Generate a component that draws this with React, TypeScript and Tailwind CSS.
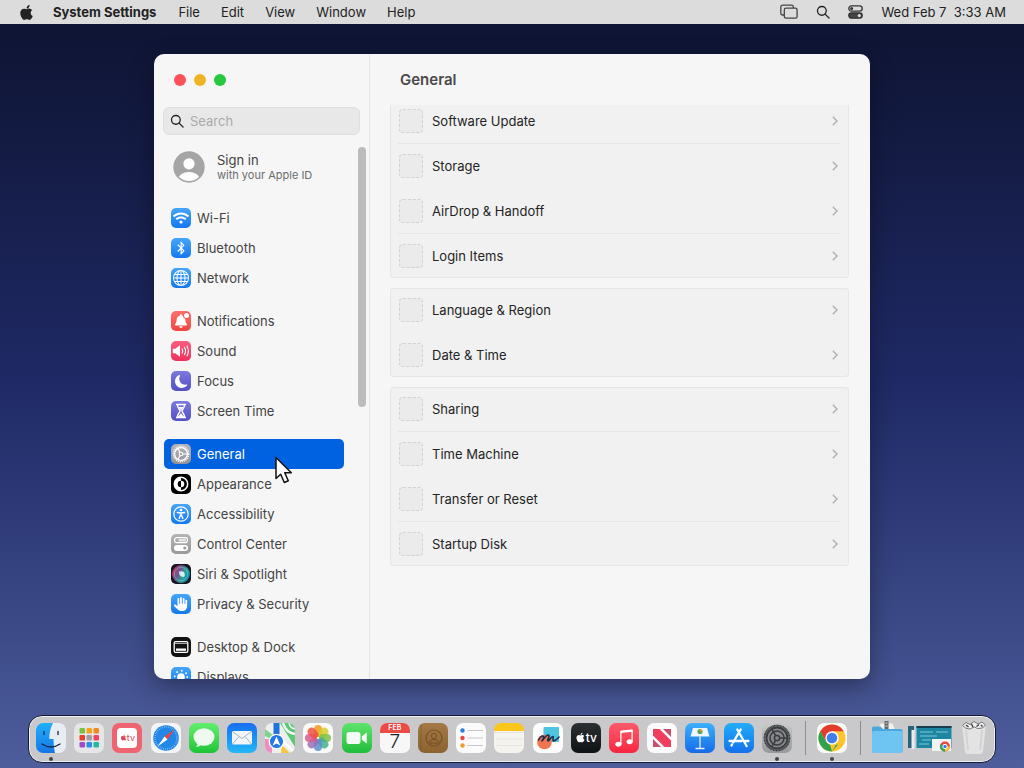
import type { ReactNode } from "react";
import { FaApple, FaBluetoothB, FaWifi, FaBell } from "react-icons/fa";
import { FaHand } from "react-icons/fa6";
import { BsMoonFill, BsGlobe, BsMusicNoteBeamed } from "react-icons/bs";

type Item = { name: string; color: string; icon: ReactNode };

function Gear({ className }: { className?: string }) {
  return (
    <svg viewBox="0 0 20 20" className={className} fill="none" stroke="currentColor">
      <circle cx="10" cy="10" r="7.6" strokeWidth="1.6" strokeDasharray="1.1 0.9" />
      <circle cx="10" cy="10" r="6.4" strokeWidth="1.3" />
      <circle cx="10" cy="10" r="1.8" strokeWidth="1.1" />
      <path d="M11.8 10h4.6M9.1 8.4 6.8 4.5M9.1 11.6l-2.3 3.9" strokeWidth="1.2" />
    </svg>
  );
}

const blue = "bg-linear-to-b from-[#45a5f8] to-[#1478ee]";
const purple = "bg-linear-to-b from-[#7d79e0] to-[#5450c4]";

const sidebar: Item[][] = [
  [
    { name: "Wi-Fi", color: blue, icon: <FaWifi className="size-4" /> },
    { name: "Bluetooth", color: blue, icon: <FaBluetoothB className="size-3.5" /> },
    { name: "Network", color: blue, icon: <BsGlobe className="size-4" /> },
  ],
  [
    {
      name: "Notifications",
      color: "bg-linear-to-b from-[#ff7069] to-[#ee4440]",
      icon: (
        <span className="relative">
          <FaBell className="size-3.5" />
          <span className="absolute -top-px -right-px size-[5px] rounded-full bg-white ring-1 ring-[#fa5d57]" />
        </span>
      ),
    },
    {
      name: "Sound",
      color: "bg-linear-to-b from-[#fb5c81] to-[#ee2f5b]",
      icon: (
        <svg viewBox="0 0 20 20" className="size-5" fill="none" stroke="white">
          <path d="M1.8 7.800h2.500L9 4.300v11.400L4.300 12.200H1.800z" fill="white" stroke="none" />
          <path d="M11 7.500q1.500 2.500 0 5M13.300 6q2.500 4 0 8M15.700 4.700q3.400 5.300 0 10.600" strokeWidth="1.1" />
        </svg>
      ),
    },
    { name: "Focus", color: purple, icon: <BsMoonFill className="size-[13px]" /> },
    {
      name: "Screen Time",
      color: purple,
      icon: (
        <svg viewBox="0 0 20 20" className="size-5" fill="none" stroke="white">
          <path d="M5 3.5h10M5 16.5h10" strokeWidth="1.7" />
          <path d="M6.5 4c0 3.5 2.5 4.5 2.5 6s-2.5 2.500-2.500 6h7c0-3.500-2.500-4.500-2.500-6s2.500-2.500 2.500-6" strokeWidth="1.4" />
          <path d="M7.5 6h5L10 9.500zM7.300 15.800 10 12l2.700 3.800z" fill="white" stroke="none" />
        </svg>
      ),
    },
  ],
  [
    { name: "General", color: "bg-linear-to-b from-[#b5b5ba] to-[#929297]", icon: <Gear className="size-5" /> },
    {
      name: "Appearance",
      color: "bg-black",
      icon: (
        <svg viewBox="0 0 20 20" className="size-5">
          <circle cx="10" cy="10" r="6.7" fill="none" stroke="white" strokeWidth="1.5" />
          <path d="M10 3.300a6.700 6.700 0 0 0 0 13.400v-3.400a3.300 3.300 0 0 1 0-6.600z" fill="white" />
          <path d="M10 6.700a3.300 3.300 0 0 1 0 6.600z" fill="white" />
        </svg>
      ),
    },
    {
      name: "Accessibility",
      color: blue,
      icon: (
        <svg viewBox="0 0 20 20" className="size-5" fill="none" stroke="white" strokeLinecap="round">
          <circle cx="10" cy="10" r="7.2" strokeWidth="1.2" />
          <circle cx="10" cy="6" r="1.3" fill="white" stroke="none" />
          <path d="M6.300 8.500 10 9l3.700-.5M10 9v2.500M8.200 14.500 9.300 11.500h1.400l1.100 3" strokeWidth="1.4" />
        </svg>
      ),
    },
    {
      name: "Control Center",
      color: "bg-linear-to-b from-[#b4b4b4] to-[#989898]",
      icon: (
        <svg viewBox="0 0 20 20" className="size-5">
          <rect x="3.5" y="3.7" width="13" height="5" rx="2.500" fill="none" stroke="white" strokeWidth="1.2" />
          <rect x="7.5" y="4.9" width="7.5" height="2.6" rx="1.300" fill="#e8e8e8" />
          <rect x="3" y="11" width="14" height="6" rx="3" fill="white" />
          <circle cx="13.8" cy="14" r="1.6" fill="#999" />
        </svg>
      ),
    },
    {
      name: "Siri & Spotlight",
      color: "bg-[#18151f]",
      icon: (
        <svg viewBox="0 0 20 20" className="size-5">
          <defs>
            <linearGradient id="siri" x1="0" y1="0.2" x2="1" y2="0.7">
              <stop offset="0" stopColor="#d3215f" />
              <stop offset="0.4" stopColor="#6d5a91" />
              <stop offset="0.7" stopColor="#27a99a" />
              <stop offset="1" stopColor="#1377b7" />
            </linearGradient>
          </defs>
          <circle cx="10" cy="10" r="9" fill="url(#siri)" />
          <circle cx="10" cy="10" r="6.7" fill="none" stroke="#63cfc0" strokeOpacity="0.6" />
          <path d="M8 7.500q5-1 5.500 1.500 1 4-1.500 4-4-.5-4-5.500z" fill="#e0fbff" opacity="0.9" />
        </svg>
      ),
    },
    { name: "Privacy & Security", color: blue, icon: <FaHand className="size-3.5" /> },
  ],
  [
    {
      name: "Desktop & Dock",
      color: "bg-[#111]",
      icon: (
        <svg viewBox="0 0 20 20" className="size-5">
          <rect x="3.2" y="4.7" width="13.6" height="10.6" rx="1.3" fill="none" stroke="white" strokeWidth="1.3" />
          <path d="M4 6.500h12" stroke="#aaa" />
          <rect x="5" y="11.5" width="10" height="2.3" fill="white" />
        </svg>
      ),
    },
    {
      name: "Displays",
      color: blue,
      icon: (
        <svg viewBox="0 0 20 20" className="size-5">
          <circle cx="10" cy="10" r="3.8" fill="white" />
          <circle cx="10" cy="10" r="6.3" fill="none" stroke="white" strokeWidth="1.8" strokeLinecap="round" strokeDasharray="0.1 4.85" />
        </svg>
      ),
    },
  ],
];

// rows are grouped by the visible dividers inside each panel
const panels = [
  [["Software Update"], ["Storage", "AirDrop & Handoff"], ["Login Items"]],
  [["Language & Region", "Date & Time"]],
  [["Sharing"], ["Time Machine", "Transfer or Reset"], ["Startup Disk"]],
];

function SearchIcon({ className }: { className?: string }) {
  return (
    <svg viewBox="0 0 16 16" className={className} fill="none" stroke="currentColor" strokeWidth="1.5" strokeLinecap="round">
      <circle cx="6.7" cy="6.7" r="5" />
      <path d="m10.400 10.400 4.500 4.500" />
    </svg>
  );
}

function MenuBar() {
  return (
    <header className="flex h-6 shrink-0 items-center justify-between bg-[#dcdcdc] px-[18px] text-[#222]">
      <nav className="flex items-center gap-[21px]">
        <button aria-label="Apple" className="w-[14px]">
          <FaApple className="size-[17px]" />
        </button>
        <button className="mr-px font-bold">System Settings</button>
        {["File", "Edit", "View", "Window", "Help"].map((m) => (
          <button key={m}>{m}</button>
        ))}
      </nav>
      <div className="flex items-center gap-[18px]">
        <svg viewBox="0 0 18 16" className="h-4 w-[18px]" fill="none" stroke="#444" strokeWidth="1.3">
          <path d="M4 11H2.500A1.800 1.800 0 0 1 .8 9.200V3A1.800 1.800 0 0 1 2.500 1.200h9A1.800 1.800 0 0 1 13.300 3v1" />
          <rect x="4.3" y="4.2" width="12.8" height="10" rx="1.8" />
        </svg>
        <SearchIcon className="size-[14px]" />
        <svg viewBox="0 0 15 14" className="h-[14px] w-[15px]" stroke="#333" strokeWidth="1.3">
          <rect x="0.8" y="0.9" width="13.4" height="5.2" rx="2.6" fill="none" />
          <circle cx="3.6" cy="3.5" r="1.5" fill="#333" stroke="none" />
          <rect x="0.8" y="8" width="13.4" height="5.2" rx="2.6" fill="#444" />
          <circle cx="11.3" cy="10.6" r="1.6" fill="#ddd" stroke="none" />
        </svg>
        <time className="whitespace-pre">Wed Feb 7  3:33 AM</time>
      </div>
    </header>
  );
}

function Sidebar() {
  return (
    <aside className="flex w-[216px] shrink-0 flex-col border-r border-[#e4e4e4] pt-5 text-[#434343]">
      <div className="flex gap-2 pl-5">
        <button aria-label="Close" className="size-3 rounded-full bg-[#fb5157]" />
        <button aria-label="Minimize" className="size-3 rounded-full bg-[#f0b323]" />
        <button aria-label="Zoom" className="size-3 rounded-full bg-[#27c840]" />
      </div>
      <label className="mx-[9px] mt-[21px] flex h-7 shrink-0 items-center gap-1.5 rounded-md border border-[#dedede] bg-[#e8e8e8] px-1.5">
        <SearchIcon className="size-[14px] shrink-0 text-[#222]" />
        <input
          type="text"
          aria-label="Search"
          placeholder="Search"
          className="w-full min-w-0 bg-transparent outline-none placeholder:text-[#aaa]"
        />
      </label>
      <div className="mt-3 flex min-h-0 flex-1">
        <div className="min-w-0 flex-1 overflow-hidden pr-[14px] pl-[10px]">
          <button className="flex w-full items-center gap-3 pt-1 pl-[9px] text-left">
            <svg viewBox="0 0 32 32" className="size-8">
              <defs>
                <clipPath id="face">
                  <circle cx="16" cy="16" r="14" />
                </clipPath>
              </defs>
              <circle cx="16" cy="16" r="15.7" fill="#a5a5a5" />
              <g clipPath="url(#face)" fill="white">
                <circle cx="16" cy="12.8" r="5.6" />
                <ellipse cx="16" cy="27.5" rx="10.5" ry="6.5" />
              </g>
            </svg>
            <span className="flex flex-col">
              <span className="leading-4">Sign in</span>
              <span className="text-[11px] leading-[14px] text-[#6c6c6c]">with your Apple ID</span>
            </span>
          </button>
          <nav className="mt-5 flex flex-col gap-[13px]">
            {sidebar.map((group) => (
              <ul key={group[0].name}>
                {group.map((item) => (
                  <li key={item.name}>
                    <button
                      className={`flex h-[30px] w-full items-center gap-1.5 rounded-[5px] pl-[7px] ${
                        item.name === "General" ? "bg-[#0062e1] text-white" : ""
                      }`}
                    >
                      <span className={`flex size-5 items-center justify-center rounded-[5px] text-white ${item.color}`}>
                        {item.icon}
                      </span>
                      {item.name}
                    </button>
                  </li>
                ))}
              </ul>
            ))}
          </nav>
        </div>
        <div className="mr-[3px] h-[260px] w-2 shrink-0 rounded-full bg-[#bcbcbc]" />
      </div>
    </aside>
  );
}

function Content() {
  return (
    <section className="flex min-w-0 flex-1 flex-col pr-[21px] pl-5 text-[#242424]">
      <h1 className="pt-4 pl-[10px] text-[15px] leading-5 font-semibold text-[#4a4a4a]">General</h1>
      <div className="mt-[15px] min-h-0 flex-1 overflow-hidden">
        <div className="-mt-1.5 flex flex-col gap-[10px]">
          {panels.map((sections) => (
            <div
              key={sections[0][0]}
              className="divide-y divide-[#e6e6e6] rounded-[4px] bg-[#f1f1f1] px-2 ring-1 ring-[#e6e6e6] ring-inset"
            >
              {sections.map((rows) => (
                <ul key={rows[0]} className="flex flex-col gap-px">
                  {rows.map((row) => (
                    <li key={row}>
                      <button className="flex h-11 w-full items-center gap-[9px] pl-px text-left">
                        <span className="size-6 rounded-[4px] border border-dashed border-[#d2d2d2] bg-[#ebebeb]" />
                        <span className="flex-1">{row}</span>
                        <svg viewBox="0 0 6 10" className="mr-[3px] h-[10px] w-1.5" fill="none" stroke="#b2b2b2" strokeWidth="1.5">
                          <path d="m.8.8 4.200 4.200L.8 9.200" />
                        </svg>
                      </button>
                    </li>
                  ))}
                </ul>
              ))}
            </div>
          ))}
        </div>
      </div>
    </section>
  );
}

function DockIcon({ name, running, children }: { name: string; running?: boolean; children: ReactNode }) {
  return (
    <button aria-label={name} className="relative shrink-0">
      {children}
      {running && <span className="absolute -bottom-2 left-[13px] size-1 rounded-full bg-[#444]" />}
    </button>
  );
}

function Tile({ color, children }: { color: string; children?: ReactNode }) {
  return (
    <span className={`flex size-[30px] items-center justify-center overflow-hidden rounded-[7px] text-white ${color}`}>
      {children}
    </span>
  );
}

const launchpad = ["#7ac143", "#f6a21e", "#f08a24", "#e5412d", "#9aa0a6", "#ef4565", "#a04ac8", "#2f8fe8", "#22b8a6"];
const petals = ["#f79a1c", "#d3cf2b", "#7fbf45", "#45b08c", "#5a8fd0", "#9a70b8", "#d85a8b", "#ef5142"];

const apps: { name: string; running?: boolean; art: ReactNode }[] = [
  {
    name: "Finder",
    running: true,
    art: (
      <Tile color="bg-[#e8edf4]">
        <svg viewBox="0 0 30 30" className="size-full">
          <defs>
            <linearGradient id="finder" x2="0" y2="1">
              <stop stopColor="#1fb0fb" />
              <stop offset="1" stopColor="#1676e8" />
            </linearGradient>
          </defs>
          <path d="M0 0h17q-4 8-3.700 16h4.200q0 8 1.500 14H0z" fill="url(#finder)" />
          <path d="M8 8.500v3M22 8.500v3M6 21q9 6 18 0" fill="none" stroke="#16253d" strokeWidth="1.3" strokeLinecap="round" />
        </svg>
      </Tile>
    ),
  },
  {
    name: "Launchpad",
    art: (
      <Tile color="bg-[#e6e6e8]">
        <svg viewBox="0 0 30 30" className="size-full">
          {launchpad.map((c, i) => (
            <rect key={c} x={5.5 + (i % 3) * 7} y={5 + Math.floor(i / 3) * 7} width="5.5" height="5.5" rx="1.3" fill={c} />
          ))}
        </svg>
      </Tile>
    ),
  },
  {
    name: "TV Remote",
    art: (
      <Tile color="bg-[#ee6470]">
        <span className="flex size-5 items-center justify-center rounded-[4px] bg-white text-[9px] leading-none text-[#d9485b]">
          <FaApple className="size-[7px]" />
          tv
        </span>
      </Tile>
    ),
  },
  {
    name: "Safari",
    art: (
      <Tile color="bg-[#f4f5f7]">
        <svg viewBox="0 0 30 30" className="size-full">
          <circle cx="15" cy="15" r="12.8" fill="#2387e8" />
          <circle cx="15" cy="15" r="11" fill="none" stroke="#b9dcff" strokeWidth="1.5" strokeDasharray="0.5 1.42" />
          <path d="m23.500 6.500-10 7 3 3z" fill="#f0433c" />
          <path d="m6.500 23.500 7-10 3 3z" fill="white" />
        </svg>
      </Tile>
    ),
  },
  {
    name: "Messages",
    art: (
      <Tile color="bg-linear-to-b from-[#61ef6d] to-[#1ac437]">
        <svg viewBox="0 0 30 30" className="size-full" fill="#eefaef">
          <ellipse cx="15" cy="14" rx="10.5" ry="8.7" />
          <path d="M8.500 19q.5 3-1.500 5 3.500-.2 5.500-2.500z" />
        </svg>
      </Tile>
    ),
  },
  {
    name: "Mail",
    art: (
      <Tile color="bg-linear-to-b from-[#1a6df0] to-[#27b8f7]">
        <svg viewBox="0 0 30 30" className="size-full">
          <rect x="5" y="8" width="20" height="13.5" rx="1.5" fill="#f2f5f8" />
          <path d="m5.500 8.500 9.500 7 9.500-7M5.500 21l6.500-7.500M24.500 21 18 13.500" fill="none" stroke="#9daec0" strokeWidth="0.9" />
        </svg>
      </Tile>
    ),
  },
  {
    name: "Maps",
    art: (
      <Tile color="bg-[#eef0ee]">
        <svg viewBox="0 0 30 30" className="size-full">
          <path d="M15 0h15v24z" fill="#5bc873" />
          <path d="M18 0q3 10 12 11" fill="none" stroke="#f6f6f6" strokeWidth="2.5" />
          <path d="M24 0q1 5 6 6" fill="none" stroke="#f6f6f6" strokeWidth="1.5" />
          <path d="M0 16h7v14H0z" fill="#ee8fc2" />
          <path d="M0 6l8 6v5L0 13z" fill="#7ed38d" />
          <path d="m17 22 8 8h-9z" fill="#f8c740" />
          <path d="m17 17 13 13" stroke="white" strokeWidth="2.5" />
          <path d="M8.500 0h6v14h-6z" fill="#1d73dc" />
          <circle cx="11.5" cy="18.5" r="7.2" fill="#2478e8" stroke="white" strokeWidth="1.3" />
          <path d="m11.500 13.500 4 9.300-4-2.300-4 2.300z" fill="white" />
        </svg>
      </Tile>
    ),
  },
  {
    name: "Photos",
    art: (
      <Tile color="bg-[#fafafa]">
        <svg viewBox="0 0 30 30" className="size-full">
          {petals.map((c, i) => (
            <rect key={c} x="11" y="2" width="8" height="12" rx="4" fill={c} fillOpacity="0.85" transform={`rotate(${i * 45} 15 15)`} />
          ))}
        </svg>
      </Tile>
    ),
  },
  {
    name: "FaceTime",
    art: (
      <Tile color="bg-linear-to-b from-[#5ee36c] to-[#1cbd3b]">
        <svg viewBox="0 0 30 30" className="size-full" fill="#f4fbf4">
          <rect x="4.5" y="9" width="14" height="12" rx="2.8" />
          <path d="m19.800 13.300 5-3.800v11l-5-3.800z" />
        </svg>
      </Tile>
    ),
  },
  {
    name: "Calendar",
    art: (
      <span className="flex size-[30px] flex-col overflow-hidden rounded-[7px] bg-[#f7f7f7] text-center text-[#222]">
        <span className="bg-[#eb4b46] text-[7px] leading-[10px] font-semibold text-white">FEB</span>
        <span className="text-[19px] leading-[18px] font-light">7</span>
      </span>
    ),
  },
  {
    name: "Contacts",
    art: (
      <Tile color="bg-linear-to-b from-[#a37946] to-[#8c6230]">
        <svg viewBox="0 0 30 30" className="size-full" fill="none" stroke="#755027">
          <path d="M3 0v30" strokeOpacity="0.5" />
          <circle cx="16" cy="15" r="8" strokeWidth="1.2" />
          <circle cx="16" cy="13" r="2.6" />
          <path d="M10.500 19q5.500-5 11 0M10 20h12" />
        </svg>
      </Tile>
    ),
  },
  {
    name: "Reminders",
    art: (
      <Tile color="bg-[#fbfbfb]">
        <svg viewBox="0 0 30 30" className="size-full">
          <path d="M11.500 7.500H27M11.500 15H27M11.500 22.500H27" stroke="#c8c8c8" />
          <circle cx="6.5" cy="7.5" r="2.2" fill="#2a7de1" />
          <circle cx="6.5" cy="15" r="2.2" fill="#e8483f" />
          <circle cx="6.5" cy="22.5" r="2.2" fill="#f29a2e" />
        </svg>
      </Tile>
    ),
  },
  {
    name: "Notes",
    art: (
      <Tile color="bg-linear-to-b from-[#fbc51b] from-27% to-[#f4f3ee] to-27%">
        <svg viewBox="0 0 30 30" className="size-full" stroke="#dfddd6" strokeWidth="0.7">
          <path d="M0 9.500h30M2 16h26M2 22.500h26" />
        </svg>
      </Tile>
    ),
  },
  {
    name: "Freeform",
    art: (
      <Tile color="bg-[#fcfcfc]">
        <svg viewBox="0 0 30 30" className="size-full">
          <rect x="10.5" y="4" width="15.5" height="15" rx="1" fill="#4ec5e0" />
          <circle cx="11.500" cy="19" r="7.3" fill="#ef7650" />
          <path d="M5.500 17C8 12 11 12 10.500 15c-.5 2-2 3-1.500 3s4-6.500 6.500-6c2 .5-2 6-.5 6s3-5 5-4.500c1 .5-1 4 .5 4.500 1.500 0 3-1.500 5.500-4" fill="none" stroke="#1b2b4a" strokeWidth="1.6" strokeLinecap="round" />
        </svg>
      </Tile>
    ),
  },
  {
    name: "TV",
    art: (
      <Tile color="bg-linear-to-b from-[#2b3033] to-[#0f1214]">
        <span className="flex items-center text-[12px] leading-none font-medium">
          <FaApple className="size-[11px]" />
          tv
        </span>
      </Tile>
    ),
  },
  {
    name: "Music",
    art: (
      <Tile color="bg-linear-to-b from-[#fb5a6c] to-[#f8243f]">
        <BsMusicNoteBeamed className="size-5" />
      </Tile>
    ),
  },
  {
    name: "News",
    art: (
      <Tile color="bg-[#fbfbfb]">
        <svg viewBox="0 0 30 30" className="size-full">
          <path d="M6 6h6.500L24 17.500V24h-6.500L6 12.500z" fill="#ef3f5c" />
          <path d="M16 6h8v8zM6 16v8h8z" fill="#c7506c" />
        </svg>
      </Tile>
    ),
  },
  {
    name: "Keynote",
    art: (
      <Tile color="bg-linear-to-b from-[#3fb0fa] to-[#176ae8]">
        <svg viewBox="0 0 30 30" className="size-full">
          <path d="M8 5h14l2.500 8.500h-19z" fill="#eef6fd" />
          <circle cx="15" cy="8.5" r="2.6" fill="#58a55c" />
          <path d="M15 8.500V6a2.600 2.600 0 0 1 2.500 2.500z" fill="#ef9c34" />
          <path d="M15 13.500V25M10.500 25.500h9" stroke="#e2f0fd" strokeWidth="1.3" />
        </svg>
      </Tile>
    ),
  },
  {
    name: "App Store",
    art: (
      <Tile color="bg-linear-to-b from-[#25acf8] to-[#1671eb]">
        <svg viewBox="0 0 30 30" className="size-full" fill="none" stroke="white" strokeWidth="2.3" strokeLinecap="round">
          <path d="M13.300 6.500 21.500 21M16.700 6.500l-7.500 12.800M5.500 18h12.300M21.500 18h3M8 21.500l-.5 1M22.200 22.300l.5.800" />
        </svg>
      </Tile>
    ),
  },
  {
    name: "System Settings",
    running: true,
    art: (
      <Tile color="bg-linear-to-b from-[#c9c9ca] to-[#98999b]">
        <svg viewBox="0 0 30 30" className="size-full" fill="none" stroke="#3a3d40">
          <circle cx="15" cy="15" r="13" fill="#85878a" stroke="none" />
          <circle cx="15" cy="15" r="12.5" strokeWidth="1.8" strokeDasharray="1 0.5" />
          <circle cx="15" cy="15" r="10.500" strokeWidth="1.8" />
          <circle cx="15" cy="15" r="7" strokeWidth="1.500" />
          <circle cx="15" cy="15" r="2.600" strokeWidth="1.5" />
          <path d="M17.500 15h8M13.700 12.800l-4-7M13.700 17.200l-4 7" strokeWidth="1.600" />
        </svg>
      </Tile>
    ),
  },
];

function Dock() {
  return (
    <footer className="mx-auto mb-[5px] flex h-12 w-[calc(100%-56px)] max-w-[1160px] shrink-0 items-center rounded-[14px] border border-[#151a35] bg-[#c9c9cb] pr-2 pb-[3px] pl-[7px] inset-ring inset-ring-[#eee]">
      <div className="flex flex-1 justify-between">
        {apps.map((app) => (
          <DockIcon key={app.name} name={app.name} running={app.running}>
            {app.art}
          </DockIcon>
        ))}
      </div>
      <div className="mr-[11px] ml-[13px] h-[34px] w-px bg-[#8d8d90]" />
      <DockIcon name="Chrome" running>
        <Tile color="bg-[#fafafa]">
          <svg viewBox="0 0 30 30" className="size-full">
            <circle cx="15" cy="15" r="13.5" fill="#fbc62d" />
            <path d="M3.300 8.200A13.500 13.500 0 0 1 26.700 8.200H15L9.100 18.400z" fill="#e33b2e" />
            <path d="M3.300 8.200 9.100 18.400A6.800 6.800 0 0 0 15 21.800h5.900L15 28.500A13.500 13.500 0 0 1 3.300 8.200" fill="#2fa14f" />
            <path d="M20.900 18.400 15 28.500l-2-7 4-1z" fill="#fbc62d" />
            <circle cx="15" cy="15" r="6.7" fill="white" />
            <circle cx="15" cy="15" r="5.3" fill="#3f80ee" />
          </svg>
        </Tile>
      </DockIcon>
      <div className="mr-[10px] ml-[13px] h-[34px] w-px bg-[#8d8d90]" />
      <div className="flex items-center">
        <DockIcon name="Downloads">
          <svg viewBox="0 0 32 34" className="h-[34px] w-8">
            <path d="M7 9 9.500 2.500h12L24 9z" fill="#f1f1f1" />
            <path d="M13.500 0h4v9h-4z" fill="#66696c" />
            <path d="M14.500 2h2M14.500 5h2" stroke="#ddd" />
            <path d="M1 7q0-1.500 1.500-1.500h7L12 8h18q1.500 0 1.500 1.500V31H1z" fill="#4aa9dc" />
            <rect x="1" y="10" width="30.5" height="22" rx="1.5" fill="#6fc5f2" />
          </svg>
        </DockIcon>
        <DockIcon name="Minimized window">
          <svg viewBox="0 0 44 28" className="ml-[5px] h-7 w-11">
            <path d="M0 2h6v22H0z" fill="#28637c" />
            <path d="M3.500 6h3v19h-3z" fill="#e8edef" />
            <rect x="8.5" y="2" width="35" height="22" fill="#1d87a3" />
            <path d="M8.500 3h35" stroke="#173d50" strokeWidth="2" />
            <path d="M12 8h13M28 8h12M12 12h17M14 16h9M11 20h10" stroke="#5fb3c5" strokeWidth="1.5" />
            <rect x="24" y="15" width="19" height="12" fill="#f1f2f4" />
            <circle cx="37" cy="22.5" r="5" fill="#e5473a" />
            <path d="M37 22.500h5a5 5 0 0 1-5 5z" fill="#f7c433" />
            <path d="M37 22.500v5a5 5 0 0 1-4.500-7.300z" fill="#34a353" />
            <circle cx="37" cy="22.5" r="2.2" fill="#3e7eea" stroke="white" />
          </svg>
        </DockIcon>
        <DockIcon name="Trash">
          <svg viewBox="0 0 26 34" className="ml-[9px] h-[34px] w-[26px]">
            <path d="M1 4h24l-3 26q-.4 3-3.500 3h-11Q4.400 33 4 30z" fill="#e2e3e2" />
            <path d="M5 9l2 20M21 9l-2 20" stroke="#d2d3d3" strokeWidth="2" />
            <path d="M1.500 4.500 5 1.500l4 2 4-3 4 2.500 4-2 3.500 3-3 3-5 .5-3-1.500-5 2-4-1z" fill="#eee" stroke="#777" />
            <path d="m5 4 2.500 2M10.500 3l1.500 3M15.500 5.500l2.500-2M20 4l1.500 1.500" stroke="#444" strokeWidth="1.500" />
          </svg>
        </DockIcon>
      </div>
    </footer>
  );
}

export default function App() {
  return (
    <div className="relative flex h-screen min-h-[480px] flex-col overflow-hidden bg-linear-to-b from-[#0f1535] from-5% via-[#1f2a66] via-50% to-[#4e5d9c] font-[Inter,'Liberation_Sans',sans-serif] text-[13px] leading-4">
      <MenuBar />
      <main className="mx-auto mt-[30px] mb-9 flex min-h-0 w-[calc(100%-308px)] min-w-[600px] max-w-[716px] flex-1 overflow-hidden rounded-[10px] bg-[#f6f6f6] shadow-[0_8px_24px_rgba(0,0,0,0.35)]">
        <Sidebar />
        <Content />
      </main>
      <Dock />
      <svg viewBox="0 0 18 28" className="pointer-events-none absolute top-[456px] left-[275px] h-7 w-[18px]">
        <path d="M1 1.500v21l4.700-4.300 3.600 8.300 4-1.800-3.600-8h6.600z" fill="white" stroke="#111" strokeWidth="1.5" strokeLinejoin="round" />
      </svg>
    </div>
  );
}
